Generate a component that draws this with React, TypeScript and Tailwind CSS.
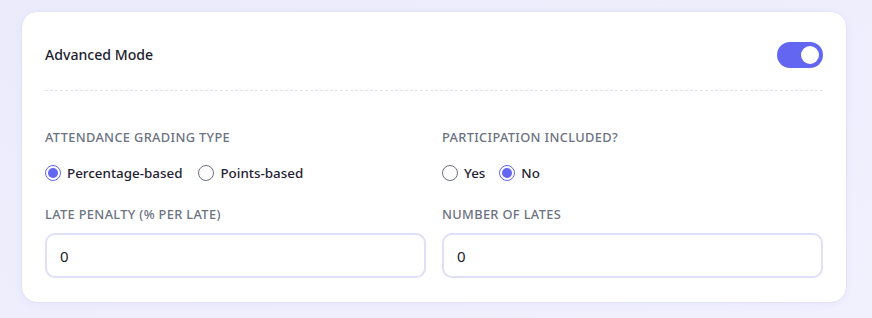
import { useState } from 'react';

function Toggle({ on, onChange }: { on: boolean; onChange: (v: boolean) => void }) {
  return (
    <button
      type="button"
      onClick={() => onChange(!on)}
      className={`relative w-[46px] h-[26px] rounded-full transition-colors ${on ? 'bg-[#6366f1]' : 'bg-gray-300'}`}
    >
      <span
        className={`absolute top-[4px] w-[18px] h-[18px] rounded-full bg-white transition-all ${on ? 'left-[24px]' : 'left-[4px]'}`}
      />
    </button>
  );
}

function Radio({ label, checked, onClick }: { label: string; checked: boolean; onClick: () => void }) {
  return (
    <label className="flex items-center gap-[6px] cursor-pointer" onClick={onClick}>
      <span
        className={`w-[16px] h-[16px] rounded-full border flex items-center justify-center ${checked ? 'border-[#6366f1]' : 'border-[#6b7280]'}`}
      >
        {checked && <span className="w-[10px] h-[10px] rounded-full bg-[#6366f1]" />}
      </span>
      <span className="text-[13.4px] font-medium text-[#1f2233]">{label}</span>
    </label>
  );
}

function FieldLabel({ children }: { children: string }) {
  return <p className="text-[12.8px] font-medium uppercase tracking-[0.35px] text-[#6b7280]">{children}</p>;
}

export default function App() {
  const [advanced, setAdvanced] = useState(true);
  const [grading, setGrading] = useState<'percentage' | 'points'>('percentage');
  const [participation, setParticipation] = useState(false);
  const [penalty, setPenalty] = useState('0');
  const [lates, setLates] = useState('0');

  return (
    <div
      className="w-[872px] h-[318px] bg-gradient-to-br from-[#ecebfb] to-[#f1f1fe] pt-[11px] pl-[21px] pr-[25px]"
      style={{ fontFamily: '"Noto Sans", "Open Sans", sans-serif' }}
    >
      <div className="bg-white rounded-[16px] border border-[#e3e2f7] px-[23px] pt-[23px] pb-[24px] shadow-[0_2px_8px_rgba(99,102,241,0.06)]">
        {/* Header */}
        <div className="flex items-center justify-between h-[40px]">
          <h2 className="text-[14.1px] font-medium text-[#1c1d2e]">Advanced Mode</h2>
          <Toggle on={advanced} onChange={setAdvanced} />
        </div>
        <div className="mt-[15px] border-t border-dashed border-[#e2e2ee]" />

        {/* Options */}
        <div className="grid grid-cols-2 gap-x-[16px] mt-[37px]">
          <div>
            <FieldLabel>Attendance Grading Type</FieldLabel>
            <div className="flex items-center gap-[16px] mt-[16px]">
              <Radio label="Percentage-based" checked={grading === 'percentage'} onClick={() => setGrading('percentage')} />
              <Radio label="Points-based" checked={grading === 'points'} onClick={() => setGrading('points')} />
            </div>
          </div>
          <div>
            <FieldLabel>Participation Included?</FieldLabel>
            <div className="flex items-center gap-[14px] mt-[16px]">
              <Radio label="Yes" checked={participation} onClick={() => setParticipation(true)} />
              <Radio label="No" checked={!participation} onClick={() => setParticipation(false)} />
            </div>
          </div>

          <div className="mt-[22px]">
            <FieldLabel>Late Penalty (% per late)</FieldLabel>
            <input
              value={penalty}
              onChange={(e) => setPenalty(e.target.value)}
              className="mt-[9px] w-full h-[45px] rounded-[10px] border-2 border-[#e0dff8] px-[13px] text-[15px] text-[#1c1d2e] outline-none"
            />
          </div>
          <div className="mt-[22px]">
            <FieldLabel>Number of Lates</FieldLabel>
            <input
              value={lates}
              onChange={(e) => setLates(e.target.value)}
              className="mt-[9px] w-full h-[45px] rounded-[10px] border-2 border-[#e0dff8] px-[13px] text-[15px] text-[#1c1d2e] outline-none"
            />
          </div>
        </div>
      </div>
    </div>
  );
}
